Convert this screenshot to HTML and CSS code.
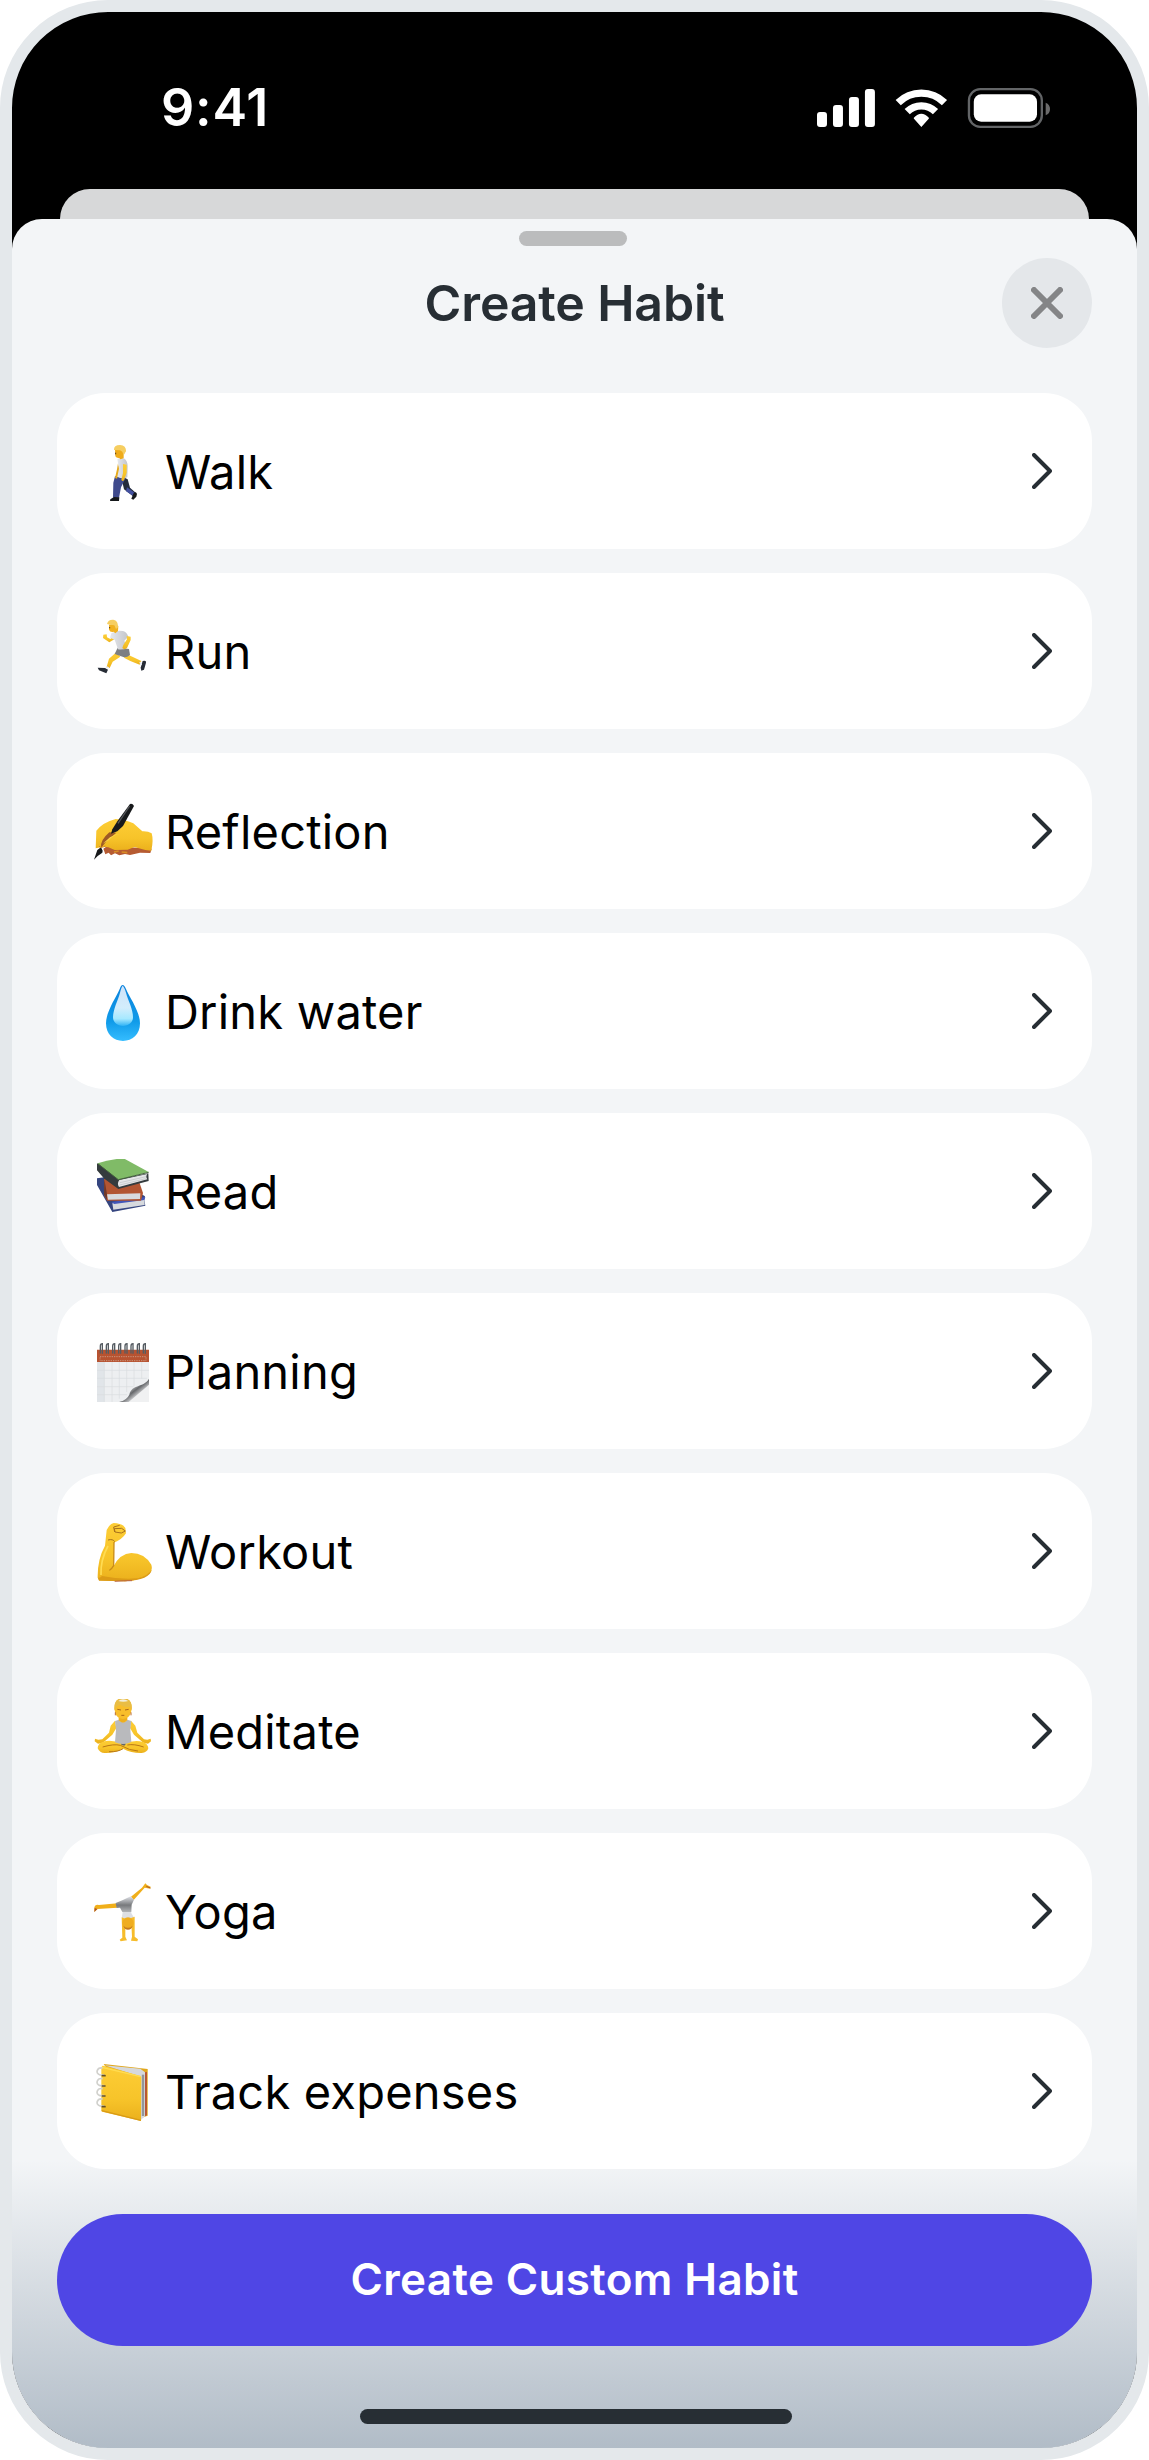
FILE: index.html
```html
<!DOCTYPE html>
<html lang="en">
<head>
    <meta charset="UTF-8">
    <meta name="viewport" content="width=device-width, initial-scale=1.0">
    <title>Create Habit</title>
    <link rel="stylesheet" href="styles.css">
</head>
<body>
    <!-- Shared gradients and symbols -->
    <svg class="defs" width="0" height="0" aria-hidden="true">
        <defs>
            <linearGradient id="skin" x1="0" y1="0" x2="0" y2="1">
                <stop offset="0" stop-color="#fdcd35"/>
                <stop offset="0.6" stop-color="#f7c42a"/>
                <stop offset="1" stop-color="#ebb01c"/>
            </linearGradient>
            <linearGradient id="shirt" x1="0" y1="0" x2="1" y2="0">
                <stop offset="0" stop-color="#e6e8ed"/>
                <stop offset="1" stop-color="#c3c5ca"/>
            </linearGradient>
            <linearGradient id="water" x1="0" y1="0" x2="0" y2="1">
                <stop offset="0" stop-color="#0a83dd"/>
                <stop offset="0.65" stop-color="#109be9"/>
                <stop offset="1" stop-color="#35bdff"/>
            </linearGradient>
            <linearGradient id="shine" x1="0" y1="0" x2="0" y2="1">
                <stop offset="0" stop-color="#d0e2f8"/>
                <stop offset="0.55" stop-color="#d3edfc"/>
                <stop offset="0.82" stop-color="#a6e9ff"/>
                <stop offset="1" stop-color="#2fb2f5"/>
            </linearGradient>
            <linearGradient id="curl" x1="0" y1="0" x2="1" y2="1">
                <stop offset="0.3" stop-color="#f2f3f4"/>
                <stop offset="0.52" stop-color="#66686b"/>
                <stop offset="0.7" stop-color="#dedfe1"/>
            </linearGradient>
            <linearGradient id="shorts" x1="0" y1="0" x2="0" y2="1">
                <stop offset="0" stop-color="#e1e3e8"/>
                <stop offset="0.55" stop-color="#77797c"/>
                <stop offset="1" stop-color="#b5b7ba"/>
            </linearGradient>
            <symbol id="chevron" viewBox="0 0 20 36">
                <path d="M2 2l16 16L2 34" fill="none" stroke="#272e34" stroke-width="4" stroke-linecap="round" stroke-linejoin="round"/>
            </symbol>
        </defs>
    </svg>

    <div class="phone">
        <div class="status-bar">
            <span class="time">9:41</span>
            <svg class="status-icons" viewBox="111 84 700 120" aria-hidden="true">
                <g fill="#fff">
                    <rect x="111" y="156" width="30" height="45" rx="9"/>
                    <rect x="159" y="135" width="30" height="66" rx="9"/>
                    <rect x="207" y="111" width="30" height="90" rx="9"/>
                    <rect x="255" y="87" width="30" height="114" rx="9"/>
                    <path d="M402 173Q424.500 150 447 173Q448 175 446 177L424.500 201L403 177Q401 175 402 173Z"/>
                    <rect x="582" y="103" width="190" height="82" rx="22"/>
                </g>
                <g fill="none" stroke="#fff" stroke-width="22">
                    <path d="M355 128A99 99 0 0 1 494 128"/>
                    <path d="M382 155A60 60 0 0 1 467 155"/>
                </g>
                <rect x="567.500" y="87.500" width="219" height="113" rx="34" fill="none" stroke="#636567" stroke-width="7"/>
                <path d="M798 128Q811 133 811 147T798 166Z" fill="#6b6b6b"/>
            </svg>
        </div>

        <div class="back-sheet"></div>

        <div class="sheet">
            <div class="grabber"></div>
            <header class="header">
                <h1 class="title">Create Habit</h1>
                <button class="close" aria-label="Close">
                    <svg width="32" height="32" viewBox="0 0 32 32"><path d="M3 3l26 26M29 3L3 29" stroke="#848587" stroke-width="6" stroke-linecap="round"/></svg>
                </button>
            </header>

            <ul class="habits">
                <li class="habit">
                    <svg class="emoji" viewBox="126 117 192 192">
                        <path d="M213 228L233 238L240 263L258 279L251 290L222 268Z" fill="#252c3c"/>
                        <path d="M231 262L256 280L250 288L228 274Z" fill="#4451a0"/>
                        <path d="M195 229L228 232L213 262L207 293L189 293L190 248Z" fill="#3f4a8c"/>
                        <path d="M181 298L192 291L208 292L207 303H180Z" fill="#15181b"/>
                        <path d="M244 296L251 279Q256 274 261 281L259 290L250 299Z" fill="#15181b"/>
                        <path d="M204 190L201 208L195 234L201 236L210 211Z" fill="#e6aa1c"/>
                        <path d="M202 178Q210 171 224 176Q233 184 233 199L232 232Q216 238 202 230L207 206Z" fill="url(#shirt)"/>
                        <path d="M219 192L230 194L230 218L222 241Q217 246 214 239L219 219Z" fill="url(#skin)"/>
                        <path d="M195 150L196 169Q199 175 208 174L211 178L221 175L221 163L227 151L216 141Z" fill="#efab19"/>
                        <path d="M192 150Q191 135 210 135Q229 136 228 154L221 166L217 155L210 151Z" fill="#f6ce61"/>
                        <path d="M197 158v5" stroke="#5b3a14" stroke-width="3"/>
                    </svg>
                    <span class="name">Walk</span>
                    <svg class="chevron"><use href="#chevron"/></svg>
                </li>
                <li class="habit">
                    <svg class="emoji" viewBox="126 657 192 192">
                        <path d="M199 757L177 776L170 800L179 804L188 785L211 770Z" fill="url(#skin)"/>
                        <path d="M230 762L247 770L274 783L269 794L241 783L222 773Z" fill="url(#skin)"/>
                        <path d="M143 803L165 804L174 809L169 820L147 811Z" fill="#272c36"/>
                        <path d="M278 783Q290 780 288 788L282 809L274 812L272 803Z" fill="#272c36"/>
                        <path d="M168 800l8 4M270 786l4 9" stroke="#e7e9ef" stroke-width="5"/>
                        <path d="M203 743L237 747L240 765Q231 773 222 772L194 762Z" fill="#7d7f82"/>
                        <path d="M192 706L181 717L171 712L170 703L160 704L159 714L178 727L198 715Z" fill="url(#skin)"/>
                        <path d="M184 700Q198 689 219 693Q231 697 235 710L223 722L231 744Q220 750 204 748L194 719L180 713Z" fill="url(#shirt)"/>
                        <path d="M230 708L242 710L242 720L231 744Q223 751 217 744L220 735L231 718Z" fill="url(#skin)"/>
                        <path d="M177 674L177 689Q181 698 191 695L196 700L204 693L205 678L195 671Z" fill="#f1b11e"/>
                        <path d="M171 672Q174 658 190 659Q205 661 204 682L198 687L193 676L180 674Z" fill="#f6ce61"/>
                        <path d="M179 681v4" stroke="#5b3a14" stroke-width="3"/>
                    </svg>
                    <span class="name">Run</span>
                    <svg class="chevron"><use href="#chevron"/></svg>
                </li>
                <li class="habit">
                    <svg class="emoji" viewBox="126 177 192 192">
                        <path d="M160 326Q180 309 240 322L305 326L301 339L270 338L240 345L225 342L208 346L195 340L183 346L176 338L166 343Z" fill="#b65b32"/>
                        <path d="M137 325L139 272Q159 247 197 237Q222 238 250 250L277 274Q294 273 305 280Q311 300 304 332L286 330L253 321L233 329L194 330L175 322L160 320Z" fill="url(#skin)"/>
                        <path d="M178 277L199 278L170 303L153 324Q149 302 178 277Z" fill="#9e5a25"/>
                        <path d="M158 311L180 292Q198 281 208 282Q190 285 176 301Z" fill="#fbd64a"/>
                        <path d="M240 192Q247 189 252 198L219 258L202 274L183 281L187 268L202 244Z" fill="#17191b"/>
                        <path d="M239 198L204 250" stroke="#54565a" stroke-width="4"/>
                        <path d="M132 359L142 330L153 322L158 332L157 338L143 348Z" fill="#17191b"/>
                        <path d="M147 319Q153 325 166 318" fill="none" stroke="#cf861c" stroke-width="3"/>
                        <path d="M192 336l14-3M215 336l17 2" stroke="#d98c25" stroke-width="5"/>
                    </svg>
                    <span class="name">Reflection</span>
                    <svg class="chevron"><use href="#chevron"/></svg>
                </li>
                <li class="habit">
                    <svg class="emoji" viewBox="126 717 192 192">
                        <path d="M218 735Q223 735 228 747C239 773 270 815 270 850C270 883 247 903 219 903S168 883 168 850C168 815 198 773 209 747Q213 735 218 735Z" fill="url(#water)"/>
                        <path d="M218 737Q223 741 228 758C234 781 249 807 249 832C249 848 235 858 219 858S189 848 189 832C189 807 204 781 210 758Q214 741 218 737Z" fill="url(#shine)"/>
                    </svg>
                    <span class="name">Drink water</span>
                    <svg class="chevron"><use href="#chevron"/></svg>
                </li>
                <li class="habit">
                    <svg class="emoji" viewBox="126 177 192 192">
                        <path d="M141 235L163 232L275 283L285 289L283 299L286 317L187 336L141 255Z" fill="#35457f"/>
                        <path d="M187 310L283 297L284 315L190 329Z" fill="#d7dade"/>
                        <path d="M184 306L286 291L283 300L193 312Z" fill="#4256b8"/>
                        <path d="M162 236L268 247L279 279L273 302L171 302L162 284Z" fill="#b25532"/>
                        <path d="M171 283L271 280L270 297L174 299Z" fill="#d8dadd"/>
                        <path d="M163 237L171 283V300L162 284Z" fill="#6f392a"/>
                        <path d="M141 191L151 190L205 238L295 220L296 243L205 267L163 236L141 211Z" fill="#343b3e"/>
                        <path d="M208 240L292 222Q286 230 292 238L207 261Q200 251 208 240Z" fill="#e4e6e8"/>
                        <path d="M210 248l78-18M209 255l78-19" stroke="#bdc0c3" stroke-width="2"/>
                        <path d="M143 190Q177 178 221 175L296 216L205 239Z" fill="#80bb67"/>
                        <path d="M143 191L205 239L296 217" fill="none" stroke="#42613b" stroke-width="3"/>
                    </svg>
                    <span class="name">Read</span>
                    <svg class="chevron"><use href="#chevron"/></svg>
                </li>
                <li class="habit">
                    <svg class="emoji" viewBox="126 717 192 192">
                        <path d="M141 786H297V906H141Z" fill="#edeff1"/>
                        <path d="M141 786h22v120h-22z" fill="#e1e5e9"/>
                        <path d="M163 786v120M186 786v120M208 786v110M230 786v90M252 786v72M275 786v50M141 811h156M141 835h150M141 860h110M141 884h90" stroke="#d9dce0" stroke-width="2"/>
                        <path d="M297 836C280 865 246 850 238 884Q231 900 207 906H297Z" fill="url(#curl)"/>
                        <path d="M297 854L236 906H297Z" fill="#f0f1f2"/>
                        <path d="M141 749h156v37H141z" fill="#b75331"/>
                        <path d="M150 770h138v12H150z" fill="none" stroke="#c9927b" stroke-width="3" stroke-dasharray="4 3"/>
                        <g fill="none" stroke="#555c62" stroke-width="4" stroke-linecap="round">
                            <path d="M151 759v-20q0-8 6-8v29M169 759v-20q0-8 6-8v29M188 759v-20q0-8 6-8v29M206 759v-20q0-8 6-8v29M225 759v-20q0-8 6-8v29M243 759v-20q0-8 6-8v29M262 759v-20q0-8 6-8v29M280 759v-20q0-8 6-8v29"/>
                        </g>
                    </svg>
                    <span class="name">Planning</span>
                    <svg class="chevron"><use href="#chevron"/></svg>
                </li>
                <li class="habit">
                    <svg class="emoji" viewBox="126 177 192 192">
                        <path d="M143 353Q142 298 165 257L170 210Q179 191 191 189Q218 190 226 204L228 220Q217 238 192 248L191 318Q210 281 244 279Q283 279 304 314Q309 331 298 341Q273 360 225 364L147 361Z" fill="url(#skin)"/>
                        <path d="M192 246L191 317Q184 329 178 331" fill="none" stroke="#c98c18" stroke-width="4"/>
                        <path d="M144 353Q151 355 156 348Q210 359 263 355Q296 346 305 329Q301 359 225 364L147 362Z" fill="#dc9b16"/>
                        <path d="M193 206L215 205L226 213L214 219L195 216ZM194 216l-3-15 18-5M174 240q15-4 20 5" fill="none" stroke="#a7711c" stroke-width="3"/>
                        <path d="M153 345Q151 300 174 258" fill="none" stroke="#ffdc53" stroke-width="5"/>
                        <path d="M194 364Q220 362 246 362" stroke="#b96545" stroke-width="3"/>
                    </svg>
                    <span class="name">Workout</span>
                    <svg class="chevron"><use href="#chevron"/></svg>
                </li>
                <li class="habit">
                    <svg class="emoji" viewBox="126 717 192 192">
                        <path d="M195 782L182 797L177 818L157 838L145 839L135 836L134 844L144 851L159 848L187 824L199 804Z" fill="url(#skin)"/>
                        <path d="M243 782L256 797L262 818L282 838L292 839L302 836L303 844L294 851L280 848L252 824L240 804Z" fill="url(#skin)"/>
                        <path d="M218 851Q181 837 158 846Q143 851 143 865Q149 879 164 879Q193 880 219 866Q246 880 275 879Q291 878 295 865Q294 851 279 846Q256 838 218 851Z" fill="url(#skin)"/>
                        <path d="M158 861Q192 851 211 856Q239 872 264 873M219 866Q205 876 177 875M281 861Q252 851 232 855" fill="none" stroke="#b97816" stroke-width="3"/>
                        <path d="M213 848L228 851L223 857L214 854Z" fill="#64666b"/>
                        <path d="M195 783L207 779Q219 794 232 779L244 783L241 809L244 846Q219 857 195 847L198 810Z" fill="#b9babd"/>
                        <path d="M206 768H232V781Q219 795 206 781Z" fill="#edaf1e"/>
                        <path d="M194 744Q194 716 219 715Q245 716 245 744L243 757Q239 775 219 777Q199 775 195 757Z" fill="#f8be2b"/>
                        <path d="M193 752C191 727 199 714 219 714C240 714 248 729 245 752L240 740Q222 743 211 734Q202 736 198 742Z" fill="#e9bd45"/>
                        <path d="M205 723Q218 713 235 723Q220 727 205 723Z" fill="#f3efdc"/>
                        <path d="M202 748l11 2M225 750l11-2M214 766h9" stroke="#a86618" stroke-width="3"/>
                        <path d="M196 757v9M243 757v9" stroke="#ba6b30" stroke-width="3"/>
                    </svg>
                    <span class="name">Meditate</span>
                    <svg class="chevron"><use href="#chevron"/></svg>
                </li>
                <li class="habit">
                    <svg class="emoji" viewBox="126 177 192 192">
                        <path d="M202 250L147 255Q135 251 133 262V276L143 267L202 263Z" fill="#f0af1a"/>
                        <path d="M133 276L134 264l8 3z" fill="#a9522c"/>
                        <path d="M243 230L276 203L286 190L291 195L302 200L301 206L284 203L251 240Z" fill="#f0af1a"/>
                        <path d="M289 199l12 5" stroke="#a9522c" stroke-width="3"/>
                        <path d="M197 249Q219 241 242 229L252 239L245 254L244 277L217 276L210 263L200 264Z" fill="url(#shorts)"/>
                        <path d="M218 276L242 276L251 291L244 300L217 300L216 289Z" fill="#dddfe3"/>
                        <path d="M215 292L226 296V350L231 361L212 364L209 359L217 353Z" fill="#f6bc2b"/>
                        <path d="M243 294L254 290L254 350L264 358L262 364L243 362L246 350Z" fill="#f6bc2b"/>
                        <circle cx="234" cy="309" r="17" fill="#efad20"/>
                        <path d="M220 317q14 13 28 0q-3 12-14 12t-14-12z" fill="#c67b1d"/>
                    </svg>
                    <span class="name">Yoga</span>
                    <svg class="chevron"><use href="#chevron"/></svg>
                </li>
                <li class="habit">
                    <svg class="emoji" viewBox="126 717 192 192">
                        <path d="M161 732L293 747V887L271 895Z" fill="#e1a71b"/>
                        <path d="M285 757L291 756V886L284 889Z" fill="#b95735"/>
                        <path d="M163 736L271 746L285 757V889L273 899L264 767Z" fill="#d6d8dc"/>
                        <path d="M279 764v124" stroke="#939699" stroke-width="7"/>
                        <path d="M158 737Q155 735 162 738L272 768Q275 770 274 776L273 903L157 875Q153 873 154 866V746Q154 738 158 737Z" fill="url(#skin)"/>
                        <path d="M156 742L272 770" stroke="#ffdc52" stroke-width="4"/>
                        <path d="M155 872L273 901" stroke="#d99b16" stroke-width="4"/>
                        <g fill="none" stroke="#d1d1cd" stroke-width="5">
                            <path d="M158 744C140 741 135 761 150 765H163M158 776C140 773 135 793 150 797H163M158 806C140 803 135 823 150 827H163M158 837C140 834 135 854 150 858H163"/>
                        </g>
                        <path d="M157 767h8M157 798h8M157 828h8M157 860h8" stroke="#645026" stroke-width="5" stroke-linecap="round"/>
                    </svg>
                    <span class="name">Track expenses</span>
                    <svg class="chevron"><use href="#chevron"/></svg>
                </li>
            </ul>

            <footer class="footer">
                <button class="create">Create Custom Habit</button>
                <div class="home-bar"></div>
            </footer>
        </div>
    </div>
</body>
</html>
```
FILE: styles.css
```css
/* Reset */
* {
    margin: 0;
    padding: 0;
    box-sizing: border-box;
}
body {
    font-family: Inter, "Liberation Sans", sans-serif;
    background-color: #fff;
    color: #000;
}
button {
    border: none;
    font-family: inherit;
    cursor: pointer;
}
.defs {
    display: block;
}
.phone {
    display: flex;
    flex-direction: column;
    width: 1149px;
    height: 2460px;
    border: 12px solid #e4e8eb;
    border-radius: 108px;
    background-color: #000;
    overflow: hidden;
}
.status-bar {
    display: flex;
    align-items: center;
    justify-content: space-between;
    height: 177px;
    padding: 15px 87px 0 149px;
    color: #fff;
}
.time {
    font-size: 52px;
    font-weight: 600;
    line-height: 60px;
    letter-spacing: 0.8px;
}
.status-icons {
    width: 233px;
    height: 40px;
}
.back-sheet {
    height: 30px;
    margin: 0 48px;
    border-radius: 30px 30px 0 0;
    background-color: #d7d8d9;
}
.sheet {
    flex: 1;
    padding: 12px 45px 0;
    border-radius: 30px 30px 0 0;
    background-color: #f3f5f7;
}
.grabber {
    width: 108px;
    height: 15px;
    margin: 0 0 12px 462px;
    border-radius: 8px;
    background-color: #bbbcbd;
}
.header {
    display: grid;
    grid-template-columns: 90px 1fr 90px;
    align-items: center;
    height: 90px;
}
.title {
    grid-column: 2;
    color: #272e34;
    font-size: 50px;
    font-weight: 600;
    line-height: 60px;
    letter-spacing: -0.15px;
    text-align: center;
}
.close {
    display: flex;
    align-items: center;
    justify-content: center;
    width: 90px;
    height: 90px;
    border-radius: 50%;
    background-color: #e4e7ea;
}
.habits {
    display: flex;
    flex-direction: column;
    gap: 24px;
    margin-top: 45px;
    list-style: none;
}
.habit {
    display: flex;
    align-items: center;
    height: 156px;
    padding: 0 40px 0 35px;
    border-radius: 48px;
    background-color: #fff;
}
.emoji {
    width: 64px;
    height: 64px;
    margin-right: 9px;
}
.name {
    flex: 1;
    font-size: 47px;
    line-height: 60px;
    padding-top: 2px;
    letter-spacing: 0.2px;
}
.chevron {
    width: 20px;
    height: 36px;
}
.footer {
    height: 288px;
    margin: -9px -45px 0;
    padding: 54px 45px 0;
    background: linear-gradient(rgba(177, 188, 199, 0), #b1bcc7);
}
.create {
    display: block;
    width: 100%;
    height: 132px;
    padding-bottom: 2px;
    border-radius: 66px;
    background-color: #4f46e5;
    color: #fff;
    font-size: 44px;
    font-weight: 600;
    letter-spacing: 0.35px;
}
.home-bar {
    width: 432px;
    height: 15px;
    margin: 63px 0 0 303px;
    border-radius: 8px;
    background-color: #272e34;
}
```
